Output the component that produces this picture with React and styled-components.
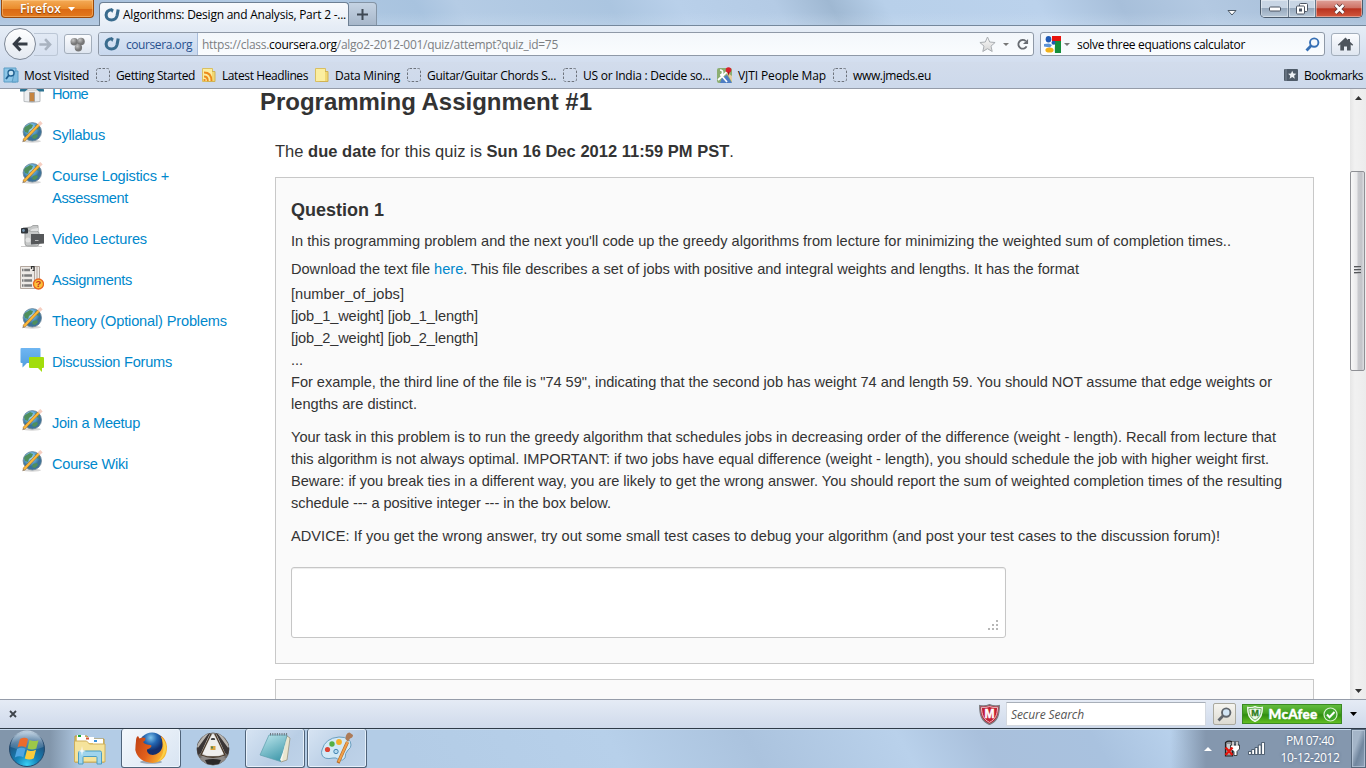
import React, { useLayoutEffect, useRef, useState } from 'react';
import styled, { createGlobalStyle, css } from 'styled-components';

const Global = createGlobalStyle`
  * { box-sizing: border-box; }
  body { margin: 0; overflow: hidden; background: #fff; }
  svg { display: block; flex: none; }
`;

const ui = '"Open Sans", "Noto Sans", sans-serif';
const web = '"Liberation Sans", Arial, sans-serif';

/* ---------- text that tracks itself to a given measure ---------- */
const Run = styled.span`
  display: inline-block;
  white-space: pre;
  flex: none;
`;

function Fit({ w, children }) {
  const ref = useRef(null);
  const [ls, setLs] = useState(0);
  useLayoutEffect(() => {
    const el = ref.current;
    const natural = el.getBoundingClientRect().width;
    setLs((w - natural) / el.textContent.length);
  }, [w]);
  return <Run ref={ref} style={{ letterSpacing: ls + 'px' }}>{children}</Run>;
}

/* ---------- window ---------- */
const Screen = styled.div`
  width: 1366px;
  height: 768px;
  display: flex;
  flex-direction: column;
  overflow: hidden;
  font-family: ${ui};
  font-size: 12px;
  color: #000;
`;

const TitleBar = styled.div`
  height: 26px;
  flex: none;
  display: flex;
  align-items: flex-start;
  padding-left: 1px;
  border-bottom: 1px solid #75889c;
  background:
    linear-gradient(180deg, rgba(255,255,255,0) 50%, rgba(215,230,245,.25) 100%),
    linear-gradient(60deg, #a9c1dc 0 8%, #b3cbe4 20%, #a8c3df 31%, #b5cce5 34%, #abc5e0 45%, #b9d0ea 50%, #b4cbe5 57%, #9fb8d2 61%, #b8d0ea 65%, #bbd2ec 76%, #a7bfda 82%, #b3c9e2 88%, #a2bad4 100%);
`;

const FirefoxButton = styled.div`
  width: 93px;
  height: 18px;
  display: flex;
  align-items: center;
  padding: 0 0 0 18px;
  gap: 7px;
  border: 1px solid #9a4a0b;
  border-top: 0;
  border-radius: 0 0 4px 4px;
  background: linear-gradient(#f4ab57, #ea8c2c 50%, #db6a14 55%, #e2791e);
  box-shadow: inset 0 0 0 1px rgba(255,205,140,.5);
  color: #fff;
  font-size: 12px;
  font-weight: 600;
  text-shadow: 0 1px 1px rgba(110,50,0,.8);
`;

const Tab = styled.div`
  width: 250px;
  height: 24px;
  margin: 2px 0 0 5px;
  display: flex;
  align-items: center;
  gap: 3px;
  padding-left: 4px;
  border: 1px solid #6d7f93;
  border-bottom: 0;
  border-radius: 4px 4px 0 0;
  background: linear-gradient(#f8fafd, #e6edf6);
`;

const NewTab = styled.div`
  width: 28px;
  height: 23px;
  margin-top: 2px;
  display: flex;
  align-items: center;
  justify-content: center;
  border: 1px solid #8494a5;
  border-left: 0;
  border-bottom: 0;
  border-radius: 0 4px 0 0;
  background: linear-gradient(#c5d3e3, #a7b7ca);
`;

const TabsMenu = styled.div`
  margin: 9px 23px 0 auto;
`;

const WindowButtons = styled.div`
  display: flex;
  width: 103px;
  height: 18px;
  margin-right: 3px;
  border: 1px solid #4b5b6d;
  border-top: 0;
  border-radius: 0 0 5px 5px;
  overflow: hidden;
`;

const WinButton = styled.div`
  width: ${p => p.$w}px;
  display: flex;
  align-items: center;
  justify-content: center;
  border-right: 1px solid #66788b;
  box-shadow: inset 0 0 0 1px rgba(255,255,255,.4);
  background: linear-gradient(#c8d5e4 45%, #97a9bd 50%, #b7c7d8);
  ${p => p.$close && css`
    border: 0;
    background: linear-gradient(#dfa29a 0, #cf7467 45%, #b93320 52%, #d2583d 100%);
  `}
`;

const NavBar = styled.div`
  height: 36px;
  flex: none;
  display: flex;
  align-items: center;
  padding: 0 6px 0 4px;
  background: linear-gradient(#e6edf6, #d3deef);
`;

const BackButton = styled.div`
  width: 32px;
  height: 32px;
  flex: none;
  display: flex;
  align-items: center;
  justify-content: center;
  border: 1px solid #7e8896;
  border-radius: 50%;
  background: linear-gradient(#ffffff, #e3e9f1);
  z-index: 1;
`;

const ForwardButton = styled.div`
  width: 24px;
  height: 23px;
  margin-left: -2px;
  display: flex;
  align-items: center;
  justify-content: center;
  border: 1px solid #bcc7d6;
  border-left: 0;
  border-radius: 0 3px 3px 0;
`;

const ToolButton = styled.div`
  width: ${p => p.$w}px;
  height: ${p => p.$h}px;
  margin-left: ${p => p.$ml}px;
  flex: none;
  display: flex;
  align-items: center;
  justify-content: center;
  border: 1px solid #a3aebb;
  border-radius: 3px;
  background: linear-gradient(#fbfcfe, #dfe6f0);
`;

const Field = styled.div`
  width: ${p => p.$w}px;
  height: 24px;
  margin-left: ${p => p.$ml}px;
  flex: none;
  display: flex;
  align-items: center;
  border: 1px solid #8f99a7;
  border-radius: 3px;
  background: linear-gradient(#f3f7fb, #fafcfe);
  overflow: hidden;
`;

const Identity = styled.div`
  width: 99px;
  height: 22px;
  display: flex;
  align-items: center;
  gap: 6px;
  padding-left: 5px;
  border-right: 1px solid #a9bddb;
  background: linear-gradient(#dbe6f5, #c8d8ee);
  color: #28518e;
`;

const Address = styled.div`
  display: flex;
  flex: 1;
  padding-left: 4px;
  color: #7c7f83;
  b { font-weight: 400; color: #000; }
`;

const FieldTools = styled.div`
  display: flex;
  align-items: center;
  gap: 7px;
  padding-right: ${p => p.$pr}px;
`;

const SearchText = styled.div`
  flex: 1;
  padding-left: 7px;
`;

const SearchEngine = styled.div`
  display: flex;
  align-items: center;
  gap: 3px;
  padding-left: 3px;
`;

const BookmarksBar = styled.div`
  height: 27px;
  flex: none;
  display: flex;
  align-items: center;
  gap: 7px;
  padding: 0 3px 0 4px;
  border-bottom: 1px solid #959ca9;
  background: linear-gradient(#d2dcec, #cdd9eb);
`;

const Bookmark = styled.div`
  display: flex;
  align-items: center;
  gap: 4px;
  flex: none;
  margin-left: ${p => (p.$end ? 'auto' : 0)};
  svg { margin-left: -1px; margin-right: 1px; }
`;

/* ---------- web page ---------- */
const Viewport = styled.div`
  height: 610px;
  flex: none;
  display: flex;
  overflow: hidden;
  background: #fff;
  font-family: ${web};
  font-size: 14.6px;
  line-height: 22px;
  color: #333;
`;

const Sidebar = styled.nav`
  width: 260px;
  flex: none;
  margin-top: -6px;
  padding-left: 20px;
  display: flex;
  flex-direction: column;
  gap: 19px;
`;

const NavItem = styled.a`
  display: flex;
  gap: 8px;
  margin-top: ${p => (p.$gap ? 20 : 0)}px;
  color: #0088cc;
  svg { margin-top: -3px; margin-bottom: -2px; }
`;

const NavLabel = styled.span`
  display: flex;
  flex-direction: column;
  align-items: flex-start;
`;

const Main = styled.main`
  width: 1090px;
  flex: none;
`;

const PageTitle = styled.h1`
  margin: 2px 0 0;
  font-size: 24px;
  line-height: 22px;
  font-weight: 700;
`;

const DueDate = styled.p`
  margin: 27px 0 0 15px;
  font-size: 16.5px;
`;

const Card = styled.section`
  width: 1039px;
  margin: ${p => p.$mt}px 0 0 15px;
  padding: 21px 15px 25px;
  border: 1px solid #c8c8c8;
  background: #fafafa;
`;

const QuestionTitle = styled.h2`
  margin: 0;
  font-size: 18px;
  line-height: 22px;
  font-weight: 700;
`;

const Para = styled.p`
  margin: ${p => p.$mt}px 0 0;
  display: flex;
  flex-direction: column;
  align-items: flex-start;
  a { color: #0088cc; }
`;

const AnswerBox = styled.div`
  width: 715px;
  height: 71px;
  margin-top: 20px;
  padding: 0 6px 6px 0;
  display: flex;
  align-items: flex-end;
  justify-content: flex-end;
  border: 1px solid #c6c6c6;
  border-radius: 3px;
  background: #fff;
  box-shadow: inset 0 1px 1px rgba(0,0,0,.075);
`;

const Scrollbar = styled.div`
  width: 16px;
  flex: none;
  display: flex;
  flex-direction: column;
  align-items: center;
  justify-content: space-between;
  padding: 7px 0 6px;
  background: linear-gradient(90deg, #e6e6e6, #f1f1f1 30%, #ececec);
`;

const Track = styled.div`
  width: 16px;
  height: 586px;
  padding-top: 69px;
`;

const Thumb = styled.div`
  width: 15px;
  height: 200px;
  display: flex;
  align-items: center;
  justify-content: center;
  border: 1px solid #8f9095;
  border-radius: 2px;
  background: linear-gradient(90deg, #f8f8f8, #e9e9eb 45%, #c9cace 55%, #c3c4c9 80%, #dedfe2);
`;

/* ---------- add-on bar ---------- */
const AddonBar = styled.div`
  height: 29px;
  flex: none;
  display: flex;
  align-items: center;
  padding-left: 9px;
  border-top: 1px solid #959ca9;
  background: linear-gradient(#e5ebf5, #cfdaeb);
`;

const SecureShield = styled.div`
  margin-left: auto;
`;

const SecureInput = styled.div`
  width: 200px;
  height: 24px;
  margin-left: 6px;
  padding: 3px 0 0 4px;
  border: 1px solid #d4d9e0;
  border-top-color: #a8afb9;
  background: #fff;
  color: #555;
  font-style: italic;
`;

const SecureGo = styled.div`
  width: 23px;
  height: 22px;
  margin-left: 7px;
  display: flex;
  align-items: center;
  justify-content: center;
  border: 1px solid #aaa99f;
  border-radius: 2px;
  background: linear-gradient(#f6f5f0, #dddbd2);
`;

const McAfee = styled.div`
  width: 100px;
  height: 20px;
  margin: 0 8px 0 6px;
  display: flex;
  align-items: center;
  justify-content: space-between;
  padding: 0 3px 0 4px;
  border: 1px solid #3a8a22;
  background: linear-gradient(#62bb3e, #43a01f 45%, #2f8d10 55%, #63be22);
  color: #fff;
  font-family: Lato, ${ui};
  font-size: 13.5px;
  font-weight: 900;
  -webkit-text-stroke: .4px #fff;
`;

const AddonMenu = styled.div`
  width: 16px;
`;

/* ---------- taskbar ---------- */
const Taskbar = styled.div`
  height: 40px;
  flex: none;
  display: flex;
  border-top: 1px solid #2e3b48;
  box-shadow: inset 0 1px 0 #c6d9ec;
  background:
    linear-gradient(90deg, #8296ab 0 50px, rgba(130,150,171,0) 82px 1170px, #8497ae 1206px 100%),
    linear-gradient(60deg, #b3cce6 0 30%, #b7d0ea 45%, #abc3de 55%, #b9d1eb 66%, #a9c0dc 72%, #a9c2df 80%, #b8d1ec 86%, #a8c2dd 100%);
`;

const TaskItem = styled.div`
  width: ${p => p.$w}px;
  height: 39px;
  margin-left: ${p => p.$ml || 0}px;
  display: flex;
  align-items: center;
  justify-content: center;
  ${p => p.$open && css`
    border: 1px solid #50647a;
    border-top: 0;
    border-radius: 3px;
    background: linear-gradient(135deg, #d7e4f3, #b9cee5 60%, #bfd3e9);
    box-shadow: inset 0 0 0 1px rgba(240,248,255,.8);
  `}
  ${p => p.$active && css`
    background: linear-gradient(135deg, #f4f8fc, #d8e4f2);
  `}
`;

const Tray = styled.div`
  margin-left: auto;
  display: flex;
  align-items: center;
`;

const TrayIcon = styled.div`
  margin-right: ${p => p.$mr}px;
`;

const Clock = styled.div`
  width: 70px;
  margin: 0 6px 0 10px;
  display: flex;
  flex-direction: column;
  align-items: center;
  line-height: 17px;
  color: #fff;
  text-shadow: 0 0 3px rgba(40,60,90,.6);
`;

const ShowDesktop = styled.div`
  width: 15px;
  height: 39px;
  border: 1px solid #56687c;
  box-shadow: inset 0 0 0 1px rgba(200,215,232,.55);
  background: linear-gradient(110deg, #a4b5c8 35%, #71869e 60%, #8ea2b8);
`;

/* ---------- icons ---------- */
const Coursera = () => (
  <svg width="16" height="16" viewBox="0 0 16 16">
    <path d="M8.200 2.700C4.500 2.500 2 5 2.100 8c.1 3 2.600 5 5.400 5 3.200 0 5-2 5.600-4.500L14.200 2.500" fill="none" stroke="#3a6c8e" strokeWidth="3.100" />
    <path d="M7.200 1.300l2.600 1.200-1.600 3.500-1.200-2z" fill="#3a6c8e" />
  </svg>
);

const Arrow = ({ flip, color, size }) => (
  <svg width={size} height={size} viewBox="0 0 16 16">
    <g transform={flip ? 'translate(16 0) scale(-1 1)' : undefined} fill="none" stroke={color} strokeWidth="3.200">
      <path d="M2 8h13.500M8.500 1.500L2.400 8l6.100 6.500" />
    </g>
  </svg>
);

const Caret = ({ w = 6, h = 3, color = '#777', up }) => (
  <svg width={w} height={h} viewBox="0 0 8 4" preserveAspectRatio="none">
    <path d={up ? 'M0 4h8L4 0z' : 'M0 0h8L4 4z'} fill={color} />
  </svg>
);

const Spheres = () => (
  <svg width="16" height="15" viewBox="0 0 16 15">
    <defs><radialGradient id="sph" cx=".35" cy=".3"><stop stopColor="#c5c5c5" /><stop offset="1" stopColor="#777" /></radialGradient></defs>
    <g fill="url(#sph)"><circle cx="4.300" cy="4.700" r="3.800" /><circle cx="11" cy="4.500" r="3.800" /><circle cx="8.400" cy="10.700" r="3.700" /></g>
  </svg>
);

const Star = () => (
  <svg width="17" height="17" viewBox="0 0 17 17">
    <defs><linearGradient id="st" x2="0" y2="1"><stop stopColor="#fafafa" /><stop offset="1" stopColor="#d5d5d5" /></linearGradient></defs>
    <path d="M8.500 1l2.200 5 5.400.5-4.100 3.600 1.200 5.400-4.700-2.800-4.700 2.800L5 10.100.9 6.500 6.300 6z" fill="url(#st)" stroke="#a9adb1" />
  </svg>
);

const Reload = () => (
  <svg width="13" height="13" viewBox="0 0 14 14">
    <path d="M10.500 3.400A4.700 4.700 0 1 0 11.400 9" fill="none" stroke="#686c72" strokeWidth="2" />
    <path d="M7.500 6.500H13V1z" fill="#686c72" />
  </svg>
);

const Google = () => (
  <svg width="17" height="17" viewBox="0 0 17 17">
    <path d="M8 0h9v6H8z" fill="#e8130c" /><path d="M10 5h7v12h-6z" fill="#158f3c" />
    <path d="M0 5h8l3 4-1 8H0z" fill="#fff" />
    <ellipse cx="4.500" cy="3.300" rx="2.800" ry="3.300" fill="#1f5ab5" /><circle cx="9.500" cy="6.800" r="2" fill="#1f5ab5" /><path d="M0 8l5-.500 3 1.500-2 2.500-6-1z" fill="#5c93d6" />
    <ellipse cx="5.500" cy="14" rx="4.100" ry="2.600" fill="#f2b119" />
  </svg>
);

const Magnifier = ({ color = '#3770b5', size = 15, lens = 'none' }) => (
  <svg width={size} height={size} viewBox="0 0 15 15">
    <path d="M1.500 13.500l4.800-5" stroke={color} strokeWidth="2.800" />
    <circle cx="9.200" cy="5.600" r="4.200" fill={lens} stroke={color} strokeWidth="1.900" />
  </svg>
);

const HomeGlyph = () => (
  <svg width="17" height="14" viewBox="0 0 17 14">
    <path d="M8.500.500L.8 7.700l1 1L3.300 7.500V13.500h3.700V9.500h3v4h3.700v-6l1.500 1.200 1-1L13 4.800V2h-2v1z" fill="#4d545c" />
  </svg>
);

const MostVisited = () => (
  <svg width="16" height="16" viewBox="0 0 16 16">
    <path d="M1 1h12v14H1z" fill="#8dc6e8" stroke="#5b9cc4" /><path d="M12 4h3v11h-6z" fill="#7fbbe0" stroke="#5b9cc4" />
    <circle cx="8" cy="6" r="3" fill="#c6e4f5" stroke="#1f5f90" strokeWidth="1.300" /><path d="M6 8l-3 4" stroke="#1f5f90" strokeWidth="1.800" />
  </svg>
);

const Dashed = () => (
  <svg width="16" height="16" viewBox="0 0 16 16">
    <rect x="1.500" y="1.500" width="13" height="13" rx="2" fill="none" stroke="#6d737c" strokeDasharray="2.500 1.500" />
  </svg>
);

const Folder = ({ rss }) => (
  <svg width="16" height="16" viewBox="0 0 16 16">
    <path d="M1.500 1.500h10v13h-10z" fill="#fae99a" stroke="#d9bf62" /><path d="M11 4.500h3v10H6z" fill="#f1d873" stroke="#d0b254" />
    <path d="M2 2h9v12H2z" fill="#fbeea0" />
    {rss && <g fill="none" stroke="#ec8a1c" strokeWidth="1.900"><path d="M3 5.500c4.500 0 7.500 3 7.500 8.500M3 9.500c2.500 0 3.800 1.700 3.800 4.500" /><path d="M2.500 13h2" /></g>}
  </svg>
);

const MapPin = () => (
  <svg width="16" height="16" viewBox="0 0 16 16">
    <rect x="0" y="1" width="15" height="15" rx="2" fill="#8cae72" /><path d="M5 11l5-3 5 8H3z" fill="#4d7dc4" /><path d="M9 5l6 4v6z" fill="#e6cda0" />
    <path d="M1 13L12 3M3 3c4 0 3 5 0 5M4 8l6 7" stroke="#fff" strokeWidth="1.700" fill="none" />
    <circle cx="11.500" cy="3" r="2.800" fill="#d8202b" /><path d="M10.500 5h2l-1 4z" fill="#a5131c" />
  </svg>
);

const BookmarkStar = () => (
  <svg width="16" height="14" viewBox="0 0 16 14">
    <rect x="1" y="1" width="14" height="12" rx="1" fill="#4f5b69" /><path d="M3 1v12" stroke="#7e8a98" />
    <path d="M9.200 2.800l1.200 2.700 2.900.2-2.200 2 .7 3-2.600-1.600-2.600 1.600.7-3-2.200-2 2.900-.2z" fill="#eef2f6" />
  </svg>
);

const House = () => (
  <svg width="24" height="24" viewBox="0 0 24 24">
    <path d="M4 10h16v11.500q-8 1.500-16 0z" fill="#eceef0" stroke="#b9bdc0" /><path d="M0 9.500L12-1l12 10.500v2h-5l-7-6-7 6H0z" fill="#2c7392" />
    <path d="M9.500 12.500h5V21.500h-5z" fill="#c58440" stroke="#a8a19a" />
  </svg>
);

const Globe = () => (
  <svg width="24" height="24" viewBox="0 0 24 24">
    <defs><radialGradient id="gl" cx=".4" cy=".3"><stop stopColor="#b5def4" /><stop offset=".6" stopColor="#5fa8d6" /><stop offset="1" stopColor="#3b7299" /></radialGradient></defs>
    <ellipse cx="12" cy="20.300" rx="9" ry="1.500" fill="#bbb" opacity=".6" />
    <circle cx="12.300" cy="10.800" r="9.200" fill="url(#gl)" stroke="#6b8496" strokeWidth=".8" />
    <path d="M5 6l5-3 3 1-1 3-3 2-1 3-3-1-1-3zM15 4l3 2 1.500 3-2-.5-2-2zM13 14l4-1 1 2-3 3-3-1z" fill="#4f8f5c" />
    <path d="M3.700 19.500L18.800 3.800" stroke="#a56f22" strokeWidth="3" /><path d="M3.700 19.500L18.800 3.800" stroke="#fcb83c" strokeWidth="2.100" />
    <path d="M18.700 3.800l2.800-2.600" stroke="#f6cfc2" strokeWidth="3.400" /><path d="M2.300 21.200l.8-2.700 2 1.800z" fill="#9a8468" />
  </svg>
);

const Camera = () => (
  <svg width="24" height="24" viewBox="0 0 24 24">
    <path d="M3 3l8-1 2-1.500h5V6H3z" fill="#c5c7c7" stroke="#a4a6a6" /><rect x="5" y="6" width="14" height="15" rx="2.500" fill="#c6c8c8" stroke="#9b9d9d" />
    <rect x="1" y="3" width="7" height="5.500" rx="1" fill="#30363c" /><circle cx="3.500" cy="5.500" r="1.400" fill="#7694ae" />
    <path d="M11 9h13v9.500l-13 1z" fill="#56585a" /><path d="M15 15.500h3.500" stroke="#bbb" /><path d="M1 21.500h21" stroke="#999" opacity=".5" />
    <path d="M12 4l6-1v3h-8z" fill="#e2e3e3" /><circle cx="8" cy="15" r="2.500" fill="#e3e4e4" />
  </svg>
);

const Assign = () => (
  <svg width="24" height="24" viewBox="0 0 24 24">
    <path d="M.5.500h19v22H.5z" fill="#eeeae6" stroke="#b3a79e" /><path d="M14.500 1v21M17 1v20M19.500 1v20" stroke="#b3a79e" />
    <path d="M2 4h8M2 9.500h10M2 14.500h10M2 19.500h10" stroke="#7c7c7c" strokeWidth="2.600" strokeDasharray="1.500 .7 10 0" />
    <path d="M11.500 3V.6h2.500V4.500h-1.500" fill="none" stroke="#333" strokeWidth="1.200" />
    <circle cx="18.500" cy="18" r="5" fill="#fcc13a" stroke="#e8641d" strokeWidth="1.300" />
    <text x="18.500" y="21.300" textAnchor="middle" fontFamily="Liberation Sans" fontWeight="700" fontSize="9.500" fill="#c52f22">?</text>
  </svg>
);

const Bubbles = () => (
  <svg width="24" height="24" viewBox="0 0 24 24">
    <defs><linearGradient id="bb" x2="0" y2="1"><stop stopColor="#6fb6f2" /><stop offset="1" stopColor="#519ede" /></linearGradient></defs>
    <path d="M1.500 0h18q1 0 1 1v13q0 1-1 1H7l-4.500 4.500V15h-1q-1 0-1-1V1q0-1 1-1z" fill="url(#bb)" />
    <path d="M10 9h13q1 0 1 1v9q0 1-1 1h-1v4l-4-4h-8q-1 0-1-1v-9q0-1 1-1z" fill="#a2dd0c" />
  </svg>
);

const Grip = () => (
  <svg width="11" height="11" viewBox="0 0 11 11" fill="#b7b7b7">
    <path d="M8 0h2v2H8zM4 4h2v2H4zM8 4h2v2H8zM0 8h2v2H0zM4 8h2v2H4zM8 8h2v2H8z" />
  </svg>
);

const ThumbGrip = () => (
  <svg width="7" height="9" viewBox="0 0 7 9"><path d="M0 .5h7M0 3.500h7M0 6.500h7" stroke="#55575a" /><path d="M0 1.500h7M0 4.500h7M0 7.500h7" stroke="#b5b6b9" /></svg>
);

const Shield = ({ fill, edge, rim, ink, size }) => (
  <svg width={size} height={size} viewBox="0 0 20 20">
    <path d="M.7 1.500Q6 2.500 10 .600q4 1.900 9.300.900c0 9-1.500 14.500-9.300 18C2.200 16 .700 10.500.700 1.500z" fill={fill} stroke={edge} strokeWidth="1.300" />
    <path d="M2.300 3.200Q7 3.700 10 2.400q3 1.300 7.700.8c-.3 7-2 11.500-7.700 14.300C4.300 14.700 2.600 10.200 2.300 3.200z" fill="none" stroke={rim} strokeWidth=".9" />
    <text x="10" y="13" textAnchor="middle" fontFamily="Liberation Sans" fontWeight="700" fontSize="11.500" fill={ink} stroke={ink} strokeWidth=".4">M</text>
  </svg>
);

const Check = () => (
  <svg width="15" height="15" viewBox="0 0 15 15">
    <circle cx="7.500" cy="7.500" r="6.500" fill="#3fa52a" stroke="#d8f1ce" strokeWidth="1.200" /><path d="M4 7.500l2.500 2.700L11.500 5" fill="none" stroke="#fff" strokeWidth="2" />
  </svg>
);

const StartOrb = () => (
  <svg width="38" height="38" viewBox="0 0 38 38">
    <defs>
      <radialGradient id="orb" cx=".5" cy=".95" r=".9"><stop stopColor="#37d0f5" /><stop offset=".35" stopColor="#1583b8" /><stop offset=".8" stopColor="#20527e" /><stop offset="1" stopColor="#54799b" /></radialGradient>
      <linearGradient id="shine" x2="0" y2="1"><stop stopColor="#dbe8f3" stopOpacity=".85" /><stop offset="1" stopColor="#9db9d0" stopOpacity=".15" /></linearGradient>
    </defs>
    <circle cx="19" cy="19" r="17.500" fill="url(#orb)" stroke="#24496c" />
    <path d="M2.500 17a16.500 16.500 0 0 1 33 0q-16 7-33 0z" fill="url(#shine)" />
    <path d="M12 9q4.500-2.500 8 0l-2 8.500q-4-2.500-8.500-.2z" fill="#ed6b2c" /><path d="M21.500 10q4 2 9 .2l-2.200 8.300q-4 2-8.800 0z" fill="#9cc849" />
    <path d="M9 19q4.500-2.500 8.500-.200l-2.200 8.500q-4-2-8.500.200z" fill="#4fa5e2" /><path d="M19 20q4 2 9-.300l-2.200 8.500q-4 2.300-9 .200z" fill="#fbcb3b" />
  </svg>
);

const Explorer = () => (
  <svg width="34" height="32" viewBox="0 0 34 32">
    <path d="M2 3h12l2 3h15v23H2z" fill="#e8cb6d" stroke="#b89640" />
    <path d="M4 2h8v6H4z" fill="#fff" /><path d="M5 2h3v2H5z" fill="#1eac3b" /><path d="M12 4h9v6h-9z" fill="#fff" /><path d="M13 4.500h3v2h-3z" fill="#d55233" /><path d="M20 6h10v6H20z" fill="#fff" /><path d="M21 7h3v2h-3z" fill="#3b91db" />
    <path d="M1.500 8h12l3 3H32v18H1.500z" fill="#f5e39b" stroke="#cdae5b" />
    <path d="M5.500 31V19.500q0-1.500 1.500-1.500h20q1.500 0 1.500 1.500V31h-4.500v-6.500q0-1-1-1H11q-1 0-1 1V31z" fill="#9fd4ec" stroke="#4b9dc2" />
    <path d="M9 13l.7 4 3.300 1-3.300 1-.7 4-.7-4-3.300-1 3.300-1z" fill="#fff" opacity=".9" />
  </svg>
);

const FirefoxLogo = () => (
  <svg width="34" height="32" viewBox="0 0 34 32">
    <defs>
      <radialGradient id="fg" cx=".45" cy=".2"><stop stopColor="#7fc4ec" /><stop offset=".5" stopColor="#2467b2" /><stop offset="1" stopColor="#132e6c" /></radialGradient>
      <linearGradient id="ff" x2="1" y2=".4"><stop stopColor="#bd3f14" /><stop offset=".55" stopColor="#e3611b" /><stop offset="1" stopColor="#f8b62f" /></linearGradient>
    </defs>
    <ellipse cx="17" cy="30" rx="11" ry="1.800" fill="#6d7c8e" opacity=".6" />
    <circle cx="18" cy="13.500" r="13" fill="url(#fg)" />
    <path d="M2 9q0-4 2-5l1.500 2.500q3-1.500 6-.5l-.5 2.500-2 1.500q1 1.500 4 2.500 4 0 4.500 1.500-.5 2-4.500 3.500-.5 3 3 5 5 1.500 9-2 3.500-3 3.500-8 0-5-2-9 6 4 6.500 11 .5 15-14.500 16.500Q4 30 1.300 18 1.500 12.500 2 9z" fill="url(#ff)" />
    <path d="M27 4.500q6 6 5 13.500-2 9-9 12 6-5 6.500-13 0-8-2.500-12.500z" fill="#fbd046" />
  </svg>
);

const Ball = () => (
  <svg width="34" height="34" viewBox="0 0 34 34">
    <defs>
      <radialGradient id="bl" cx=".5" cy=".45"><stop stopColor="#fff" /><stop offset=".7" stopColor="#cfcdc9" /><stop offset="1" stopColor="#5d5a59" /></radialGradient>
      <clipPath id="bc"><circle cx="17" cy="17" r="16" /></clipPath>
    </defs>
    <circle cx="17" cy="17" r="16" fill="url(#bl)" stroke="#6d6a68" />
    <g clipPath="url(#bc)">
      <path d="M14.500 0L5 21l-5 3V13zM19.500 0L29 21l5 3V13z" fill="#3a3535" />
      <path d="M12 0L1 15M22 0l11 15" stroke="#b9b5b0" strokeWidth="2.500" />
      <path d="M17 1L6.500 22q10.500 4 21 0z" fill="#efeeed" />
      <path d="M3 26q14-4 28 0l-5 8H8z" fill="#8e8a88" /><path d="M9 28q8-2 16 0l-3 6H12z" fill="#2b2828" />
      <path d="M15 2L5 23q12 4.500 24 0L19 2" fill="none" stroke="#4c3c2d" strokeWidth="1.300" />
    </g>
    <path d="M15.500 6h3l.7 2h-4.400z" fill="#444" /><path d="M14.500 14h5v4h-5z" fill="#d9a43f" /><path d="M15 14.500h2v2h-2z" fill="#50825b" />
  </svg>
);

const Notepad = () => (
  <svg width="34" height="34" viewBox="0 0 34 34">
    <defs><linearGradient id="np" x2=".5" y2="1"><stop stopColor="#c0e8ee" /><stop offset="1" stopColor="#4a9fb0" /></linearGradient></defs>
    <path d="M29 5l3 2-3 22-6 2-3-3z" fill="#e9e5cf" stroke="#918a71" strokeWidth=".7" />
    <path d="M11 4h18l-5.500 24-1 2.500L2 24z" fill="url(#np)" stroke="#5c9dac" strokeWidth=".7" />
    <path d="M29 6l-5 24-2-1 3-8z" fill="#f8f7ef" />
    <path d="M12 3.300h18" stroke="#6d7880" strokeWidth="2.600" strokeDasharray="1 1.300" />
  </svg>
);

const Paint = () => (
  <svg width="34" height="34" viewBox="0 0 34 34">
    <path d="M2 19Q5 7 19 6q12 0 12 8 0 3-3 5-3 3-3 8-2 3-6 2-3-3-6-2-9 2-11-3-1-3 0-5z" fill="#d2e9f6" stroke="#6a9fc0" />
    <circle cx="7.500" cy="18.500" r="2.600" fill="#dc4434" /><circle cx="12" cy="13" r="2.700" fill="#55af42" /><circle cx="19" cy="11" r="2.900" fill="#f6af29" /><circle cx="16" cy="20.500" r="2.200" fill="#b5d9ee" stroke="#4486b3" />
    <path d="M27.500 11L18 32" stroke="#b46a25" strokeWidth="3.200" /><path d="M27.500 11L18.500 31" stroke="#f0a04a" strokeWidth="2" />
    <path d="M25.500 8q0-6 4-6.500L33 4q0 2.500-3 3.500l-2 3.500z" fill="#ad7b58" />
  </svg>
);

const Power = () => (
  <svg width="16" height="17" viewBox="0 0 16 17">
    <path d="M1.500 2.500Q4.500 .2 8.500 2v14h-7z" fill="#8f9397" stroke="#222" strokeWidth="1.200" /><path d="M3 4h4v10H3z" fill="#c9cccf" />
    <path d="M6.500 5h9v4l-2.500 2.500v4h-3v-4L6.500 9z" fill="#fff" stroke="#222" strokeWidth=".8" /><path d="M9 5.500V1M13 5.500V1" stroke="#222" strokeWidth="2.800" /><path d="M9 6V1.500M13 6V1.500" stroke="#fff" strokeWidth="1.500" />
    <path d="M1.500 7.500l7 7.500M8.500 7.500l-7 7.500" stroke="#e3140c" strokeWidth="2.400" />
  </svg>
);

const Signal = () => (
  <svg width="17" height="13" viewBox="0 0 17 13">
    <g fill="#fff" stroke="#36475a" strokeWidth=".8"><path d="M.5 9.500h2.800v3H.5zM3.700 7.500h2.800v5H3.700zM7 5.500h2.800v7H7zM10.300 3h2.800v9.500h-2.800zM13.600.5h2.900v12h-2.900z" /></g>
  </svg>
);

/* ---------- data ---------- */
const bookmarks = [
  [MostVisited, 'Most Visited', 65],
  [Dashed, 'Getting Started', 79],
  [() => <Folder rss />, 'Latest Headlines', 86],
  [Folder, 'Data Mining', 65],
  [Dashed, 'Guitar/Guitar Chords S...', 129],
  [Dashed, 'US or India : Decide so...', 128],
  [MapPin, 'VJTI People Map', 88],
  [Dashed, 'www.jmeds.eu', 78],
];

const navItems = [
  [House, [['Home', 36]]],
  [Globe, [['Syllabus', 53]]],
  [Globe, [['Course Logistics +', 117], ['Assessment', 76]]],
  [Camera, [['Video Lectures', 95]]],
  [Assign, [['Assignments', 80]]],
  [Globe, [['Theory (Optional) Problems', 175]]],
  [Bubbles, [['Discussion Forums', 120]]],
  [Globe, [['Join a Meetup', 88]], true],
  [Globe, [['Course Wiki', 76]]],
];

const intro = [
  ['[number_of_jobs]', 113],
  ['[job_1_weight] [job_1_length]', 187],
  ['[job_2_weight] [job_2_length]', 187],
  ['...', 12],
  ['For example, the third line of the file is "74 59", indicating that the second job has weight 74 and length 59. You should NOT assume that edge weights or', 981],
  ['lengths are distinct.', 126],
];

const task = [
  ['Your task in this problem is to run the greedy algorithm that schedules jobs in decreasing order of the difference (weight - length). Recall from lecture that', 985],
  ['this algorithm is not always optimal. IMPORTANT: if two jobs have equal difference (weight - length), you should schedule the job with higher weight first.', 978],
  ['Beware: if you break ties in a different way, you are likely to get the wrong answer. You should report the sum of weighted completion times of the resulting', 991],
  ['schedule --- a positive integer --- in the box below.', 320],
];

const Lines = ({ rows }) => rows.map(([t, w], i) => <Fit key={i} w={w}>{t}</Fit>);

export default function App() {
  return (
    <Screen>
      <Global />
      <TitleBar>
        <FirefoxButton><Fit w={41}>Firefox</Fit><Caret w={7} h={4} color="#fff" /></FirefoxButton>
        <Tab><Coursera /><Fit w={223}>Algorithms: Design and Analysis, Part 2 -...</Fit></Tab>
        <NewTab><svg width="11" height="11"><path d="M5.500 0v11M0 5.500h11" stroke="#3f4954" strokeWidth="2" /></svg></NewTab>
        <TabsMenu><svg width="10" height="8"><path d="M1 1.500h8L5 6z" fill="#fff" stroke="#4c5967" /></svg></TabsMenu>
        <WindowButtons>
          <WinButton $w={28}><svg width="12" height="6"><rect x=".5" y="1" width="11" height="4" rx="1" fill="#fff" stroke="#4c5563" /></svg></WinButton>
          <WinButton $w={27}><svg width="12" height="12"><g fill="#fff" stroke="#4c5563"><rect x="3.500" y=".5" width="8" height="8" rx="1" /><rect x=".5" y="3" width="8" height="8" rx="1" /><rect x="3.500" y="6" width="2" height="2" /></g></svg></WinButton>
          <WinButton $w={46} $close><svg width="13" height="12" viewBox="0 0 13 12"><path d="M2.500 2l8 8M10.500 2l-8 8" stroke="#5c3535" strokeWidth="4.200" /><path d="M2.500 2l8 8M10.500 2l-8 8" stroke="#fff" strokeWidth="2.500" /></svg></WinButton>
        </WindowButtons>
      </TitleBar>

      <NavBar>
        <BackButton><Arrow size={16} color="#353c45" /></BackButton>
        <ForwardButton><Arrow size={13} color="#a9b3c0" flip /></ForwardButton>
        <ToolButton $w={28} $h={20} $ml={6}><Spheres /></ToolButton>
        <Field $w={936} $ml={6}>
          <Identity><Coursera /><Fit w={66}>coursera.org</Fit></Identity>
          <Address><Fit w={356}>https://class.<b>coursera.org</b>/algo2-2012-001/quiz/attempt?quiz_id=75</Fit></Address>
          <FieldTools $pr={4}><Star /><Caret /><Reload /></FieldTools>
        </Field>
        <Field $w={285} $ml={6}>
          <SearchEngine><Google /><Caret /></SearchEngine>
          <SearchText><Fit w={168}>solve three equations calculator</Fit></SearchText>
          <FieldTools $pr={4}><Magnifier /></FieldTools>
        </Field>
        <ToolButton $w={29} $h={23} $ml={6}><HomeGlyph /></ToolButton>
      </NavBar>

      <BookmarksBar>
        {bookmarks.map(([Icon, label, w], i) => (
          <Bookmark key={i}><Icon /><Fit w={w}>{label}</Fit></Bookmark>
        ))}
        <Bookmark $end><BookmarkStar /><Fit w={59}>Bookmarks</Fit></Bookmark>
      </BookmarksBar>

      <Viewport>
        <Sidebar>
          {navItems.map(([Icon, rows, gap], i) => (
            <NavItem key={i} $gap={gap}><Icon /><NavLabel><Lines rows={rows} /></NavLabel></NavItem>
          ))}
        </Sidebar>
        <Main>
          <PageTitle><Fit w={332}>Programming Assignment #1</Fit></PageTitle>
          <DueDate><Fit w={459}>The <b>due date</b> for this quiz is <b>Sun 16 Dec 2012 11:59 PM PST</b>.</Fit></DueDate>
          <Card $mt={15}>
            <QuestionTitle><Fit w={93}>Question 1</Fit></QuestionTitle>
            <Para $mt={9}><Fit w={940}>In this programming problem and the next you'll code up the greedy algorithms from lecture for minimizing the weighted sum of completion times..</Fit></Para>
            <Para $mt={6}><Fit w={788}>Download the text file <a>here</a>. This file describes a set of jobs with positive and integral weights and lengths. It has the format</Fit></Para>
            <Para $mt={3}><Lines rows={intro} /></Para>
            <Para $mt={11}><Lines rows={task} /></Para>
            <Para $mt={11}><Fit w={929}>ADVICE: If you get the wrong answer, try out some small test cases to debug your algorithm (and post your test cases to the discussion forum)!</Fit></Para>
            <AnswerBox><Grip /></AnswerBox>
          </Card>
          <Card $mt={15} />
        </Main>
        <Scrollbar>
          <Caret w={7} h={4} color="#333" up />
          <Track><Thumb><ThumbGrip /></Thumb></Track>
          <Caret w={7} h={4} color="#333" />
        </Scrollbar>
      </Viewport>

      <AddonBar>
        <svg width="8" height="8"><path d="M1 1l6 6M7 1L1 7" stroke="#3d434a" strokeWidth="1.800" /></svg>
        <SecureShield><Shield size={21} fill="#c22034" edge="#7b7d82" rim="#e9c9cd" ink="#fff" /></SecureShield>
        <SecureInput><Fit w={73}>Secure Search</Fit></SecureInput>
        <SecureGo><Magnifier color="#60666d" lens="#d3e6f6" /></SecureGo>
        <McAfee><Shield size={16} fill="#eef8ea" edge="#f0f8ed" rim="#3f9a28" ink="#2f7d1b" /><Fit w={49}>McAfee</Fit><Check /></McAfee>
        <AddonMenu><Caret w={7} h={4} color="#000" /></AddonMenu>
      </AddonBar>

      <Taskbar>
        <TaskItem $w={38} $ml={8}><StartOrb /></TaskItem>
        <TaskItem $w={34} $ml={27}><Explorer /></TaskItem>
        <TaskItem $w={60} $ml={14} $open $active><FirefoxLogo /></TaskItem>
        <TaskItem $w={34} $ml={15}><Ball /></TaskItem>
        <TaskItem $w={60} $ml={15} $open><Notepad /></TaskItem>
        <TaskItem $w={60} $ml={2} $open><Paint /></TaskItem>
        <Tray>
          <TrayIcon $mr={12}><Caret w={8} h={4} color="#fff" up /></TrayIcon>
          <TrayIcon $mr={8}><Power /></TrayIcon>
          <Signal />
          <Clock><Fit w={48}>PM 07:40</Fit><Fit w={59}>10-12-2012</Fit></Clock>
          <ShowDesktop />
        </Tray>
      </Taskbar>
    </Screen>
  );
}
